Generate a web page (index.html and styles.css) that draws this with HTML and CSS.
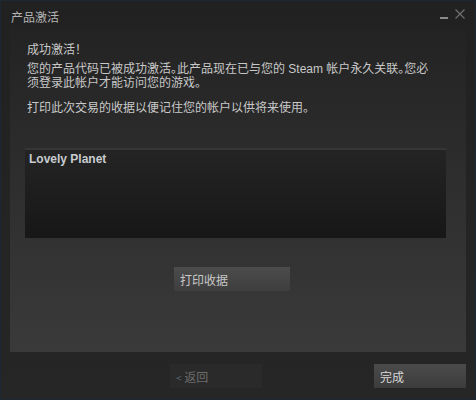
FILE: index.html
```html
<!DOCTYPE html>
<html lang="zh-CN">
<head>
<meta charset="utf-8">
<title>产品激活</title>
<link rel="stylesheet" href="styles.css">
</head>
<body>
<div class="window">
  <div class="titlebar">
    <span class="title">产品激活</span>
    <div class="controls">
      <svg class="ctl" width="10" height="12" viewBox="0 0 10 12"><rect x="1" y="9" width="8" height="2" fill="#8a8a8a"/></svg>
      <svg class="ctl" width="12" height="12" viewBox="0 0 12 12"><path d="M1.5 1.5 L10.5 10.5 M10.5 1.5 L1.5 10.5" stroke="#6e6e6e" stroke-width="1.3" fill="none"/></svg>
    </div>
  </div>
  <div class="panel">
    <p class="msg msg-head">成功激活！</p>
    <p class="msg msg-body">您的产品代码已被成功激活。此产品现在已与您的 Steam 帐户永久关联。您必须登录此帐户才能访问您的游戏。</p>
    <p class="msg msg-last">打印此次交易的收据以便记住您的帐户以供将来使用。</p>
    <div class="receipt">Lovely Planet</div>
    <div class="print-row"><button class="btn btn-print">打印收据</button></div>
  </div>
  <div class="footer">
    <button class="btn btn-back"><span class="chev">&lt;</span> 返回</button>
    <button class="btn btn-done">完成</button>
  </div>
</div>
</body>
</html>
```
FILE: styles.css
```css
html, body {
  margin: 0;
  padding: 0;
  width: 476px;
  height: 400px;
  overflow: hidden;
  background: #222222;
}
.window {
  box-sizing: border-box;
  width: 476px;
  height: 400px;
  border: 1px solid #1c2734;
  background: linear-gradient(to bottom, #212121 0%, #262626 100%);
  display: flex;
  flex-direction: column;
  font-family: "Noto Sans CJK SC", "Liberation Sans", sans-serif;
  font-size: 12px;
}
.titlebar {
  height: 27px;
  display: flex;
  align-items: center;
  justify-content: space-between;
  padding: 0 9px 0 10px;
}
.title {
  color: #b4b4b4;
  font-size: 12px;
  line-height: 14px;
  margin-top: 5px;
}
.controls {
  display: flex;
  align-items: flex-start;
  gap: 5px;
  margin-top: -1px;
}
.panel {
  margin: 0 9px;
  height: 324px;
  padding: 15px 20px 0 15px;
  box-sizing: border-box;
  background: linear-gradient(to bottom, #232323 0%, #3a3a3a 100%);
  display: flex;
  flex-direction: column;
}
.msg {
  margin: 0 10px 0 2px;
  color: #c8c8c8;
  line-height: 14px;
  font-family: "Liberation Sans", "Noto Sans CJK SC", sans-serif;
}
.msg-head { margin-bottom: 5px; }
.msg-body { margin-bottom: 11px; font-feature-settings: "halt" 1; }
.msg-last { margin-bottom: 33px; }
.receipt {
  height: 90px;
  box-sizing: border-box;
  border-top: 2px solid #363636;
  background: linear-gradient(to bottom, #242424 0%, #171717 100%);
  padding: 2px 4px;
  color: #c8ccd0;
  font-family: "Liberation Sans", sans-serif;
  font-weight: bold;
  font-size: 12px;
  line-height: 14px;
}
.print-row {
  margin-top: 29px;
  padding-left: 149px;
}
.btn {
  border: none;
  margin: 0;
  height: 24px;
  padding: 0 6px;
  text-align: left;
  font-family: "Noto Sans CJK SC", sans-serif;
  font-size: 12px;
  cursor: pointer;
}
.btn-print {
  width: 116px;
  background: linear-gradient(to bottom, #4c4c4c 0%, #3e3e3e 100%);
  color: #c8c8c8;
}
.footer {
  display: flex;
  padding: 12px 9px 0 169px;
}
.btn-back {
  width: 92px;
  background: #2a2a2a;
  color: #6c6c6c;
}
.chev {
  font-size: 10px;
  color: #5c6470;
}
.btn-done {
  width: 92px;
  margin-left: auto;
  background: linear-gradient(to bottom, #4b4b4b 0%, #3c3c3c 100%);
  color: #d8d8d8;
}
```
